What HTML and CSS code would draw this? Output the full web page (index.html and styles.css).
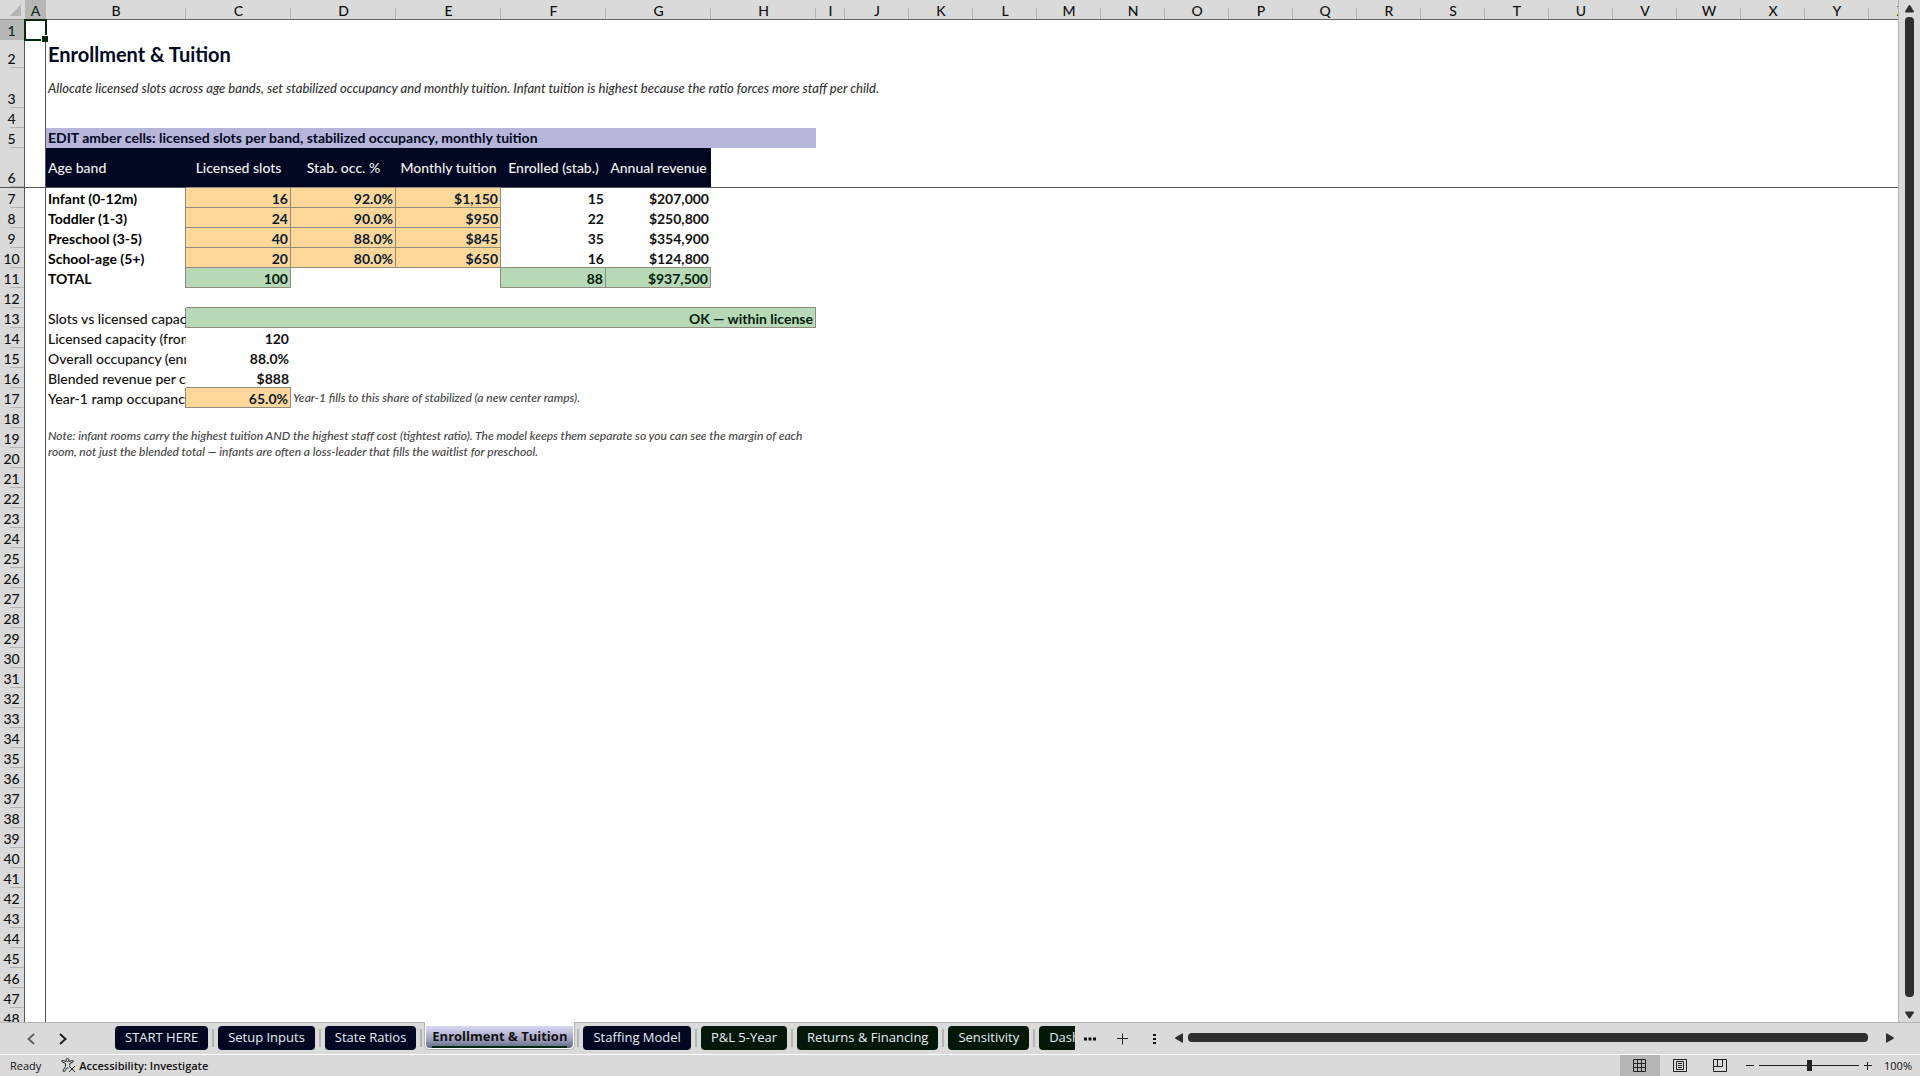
FILE: index.html
```html
<!DOCTYPE html>
<html lang="en">
<head>
<meta charset="utf-8">
<title>Enrollment &amp; Tuition</title>
<link rel="stylesheet" href="styles.css">
</head>
<body>
<div class="app">
  <main class="workspace">
    <div class="sheet">
      <table class="grid">
        <colgroup id="cols"></colgroup>
        <thead><tr id="letters"></tr></thead>
        <tbody id="rows"></tbody>
      </table>
    </div>
    <div class="vscroll">
      <button class="arrow" aria-label="Scroll up"><svg width="9" height="8" viewBox="0 0 9 8"><path d="M4.500 0Q5 0 5.500 .8L9 6.500Q9 7.500 8 7.500H1Q0 7.500 0 6.500L3.500 .8Q4 0 4.500 0z"/></svg></button>
      <div class="vthumb"></div>
      <button class="arrow arrow-down" aria-label="Scroll down"><svg width="9" height="8" viewBox="0 0 9 8"><path d="M4.500 7.500Q4 7.500 3.500 6.700L0 1.500Q0 .5 1 .5H8Q9 .5 9 1.500L5.500 6.700Q5 7.500 4.500 7.500z"/></svg></button>
    </div>
  </main>
  <nav class="tabbar">
    <div class="tabnav">
      <button aria-label="Previous sheet" class="dim"><svg width="8" height="12" viewBox="0 0 8 12"><path d="M7 1L1.500 6L7 11"/></svg></button>
      <button aria-label="Next sheet"><svg width="8" height="12" viewBox="0 0 8 12"><path d="M1 1L6.500 6L1 11"/></svg></button>
    </div>
    <div class="tabs">
      <button class="tab">START HERE</button>
      <i class="sep"></i>
      <button class="tab">Setup Inputs</button>
      <i class="sep"></i>
      <button class="tab">State Ratios</button>
      <i class="sep"></i>
      <div class="active-frame"><button class="tab-active"><span>Enrollment &amp; Tuition</span></button></div>
      <i class="sep"></i>
      <button class="tab">Staffing Model</button>
      <i class="sep"></i>
      <button class="tab green">P&amp;L 5-Year</button>
      <i class="sep"></i>
      <button class="tab green">Returns &amp; Financing</button>
      <i class="sep"></i>
      <button class="tab green">Sensitivity</button>
      <i class="sep"></i>
      <button class="tab green">Dashboard</button>
    </div>
    <div class="tabtools">
      <button aria-label="More sheets"><svg width="12" height="4" viewBox="0 0 12 4"><path class="fill" d="M0 .5h3v3H0zM4.500 .5h3v3h-3zM9 .5h3v3H9z"/></svg></button>
      <button aria-label="New sheet"><svg width="12" height="12" viewBox="0 0 12 12"><path d="M5.500 .5v11M0 5.500h11"/></svg></button>
      <button aria-label="Resize tab area"><svg width="3" height="12" viewBox="0 0 3 12"><path class="fill" d="M0 1h3v2H0zM0 5h3v2H0zM0 9h3v2H0z"/></svg></button>
    </div>
    <div class="hscroll">
      <button class="arrow" aria-label="Scroll left"><svg width="8" height="10" viewBox="0 0 8 10"><path d="M0 5Q0 4.500 1 4L7 .5Q8 0 8 1V9Q8 10 7 9.500L1 6Q0 5.500 0 5z"/></svg></button>
      <div class="hthumb"></div>
      <button class="arrow arrow-right" aria-label="Scroll right"><svg width="8" height="10" viewBox="0 0 8 10"><path d="M8 5Q8 4.500 7 4L1 .5Q0 0 0 1V9Q0 10 1 9.500L7 6Q8 5.500 8 5z"/></svg></button>
    </div>
  </nav>
  <footer class="status">
    <span class="ready">Ready</span>
    <button class="access"><svg width="15" height="15" viewBox="0 0 15 15"><circle cx="6.500" cy="2" r="1.500"/><path d="M5 3.500L1.500 2.500Q.5 2.500 .8 3.700L4.500 5.500V8.500L2 12.500Q2 14 3.500 13.500L6.500 9.500L7.500 10.500M8 3.500L11.500 2.500Q12.800 2.500 12.300 3.800L8.700 5.500V7.500M8 8L14 14M14 8L8 14"/></svg>Accessibility: Investigate</button>
    <div class="views">
      <button class="on" aria-label="Normal view"><svg width="14" height="14" viewBox="0 0 14 14"><path d="M.5 .5h12v12H.5zM4.500 .5v12M8.500 .5v12M.5 4.500h12M.5 8.500h12"/></svg></button>
      <button aria-label="Page layout view"><svg width="14" height="14" viewBox="0 0 14 14"><path d="M.5 .5h13v12H.5zM3.500 2.500h7v8h-7zM5 4.500h4M5 6.500h4M5 8.500h4"/></svg></button>
      <button aria-label="Page break preview"><svg width="14" height="14" viewBox="0 0 14 14"><path d="M.5 .5h13v12H.5zM4.500 .5v7M9.500 .5v7M.5 7.500h9"/></svg></button>
    </div>
    <div class="zoom">
      <button aria-label="Zoom out"><svg width="8" height="8" viewBox="0 0 8 8"><path d="M0 3.500h8"/></svg></button>
      <input type="range" min="0" max="100" value="50" aria-label="Zoom">
      <button aria-label="Zoom in"><svg width="8" height="8" viewBox="0 0 8 8"><path d="M0 3.500h8M3.500 0v8"/></svg></button>
      <span class="percent">100%</span>
    </div>
  </footer>
</div>
<script src="sheet.js"></script>
</body>
</html>
```
FILE: sheet.js
```js
const letters = 'ABCDEFGHIJKLMNOPQRSTUVWXYZ'.split('');
const widths = { A: 21, B: 140, C: 105, D: 105, E: 105, F: 105, G: 105, H: 105, I: 29 };
const heights = { 2: 28, 3: 40, 6: 40 };

// Each entry: [column, text, classes, colspan, rowspan]
const data = {
  1: [['A', '', 'selected']],
  2: [['B', 'Enrollment & Tuition', 'title spill']],
  3: [['B', 'Allocate licensed slots across age bands, set stabilized occupancy and monthly tuition. Infant tuition is highest because the ratio forces more staff per child.', 'subtitle spill']],
  5: [['B', 'EDIT amber cells: licensed slots per band, stabilized occupancy, monthly tuition', 'banner', 7]],
  6: [['B', 'Age band', 'head'], ['C', 'Licensed slots', 'head mid'], ['D', 'Stab. occ. %', 'head mid'], ['E', 'Monthly tuition', 'head mid'], ['F', 'Enrolled (stab.)', 'head mid'], ['G', 'Annual revenue', 'head mid']],
  7: [['B', 'Infant (0-12m)', 'bold'], ['C', '16', 'amber'], ['D', '92.0%', 'amber'], ['E', '$1,150', 'amber'], ['F', '15', 'num'], ['G', '$207,000', 'num']],
  8: [['B', 'Toddler (1-3)', 'bold'], ['C', '24', 'amber'], ['D', '90.0%', 'amber'], ['E', '$950', 'amber'], ['F', '22', 'num'], ['G', '$250,800', 'num']],
  9: [['B', 'Preschool (3-5)', 'bold'], ['C', '40', 'amber'], ['D', '88.0%', 'amber'], ['E', '$845', 'amber'], ['F', '35', 'num'], ['G', '$354,900', 'num']],
  10: [['B', 'School-age (5+)', 'bold'], ['C', '20', 'amber'], ['D', '80.0%', 'amber'], ['E', '$650', 'amber'], ['F', '16', 'num'], ['G', '$124,800', 'num']],
  11: [['B', 'TOTAL', 'bold'], ['C', '100', 'ok'], ['F', '88', 'ok'], ['G', '$937,500', 'ok']],
  13: [['B', 'Slots vs licensed capacity', ''], ['C', 'OK — within license', 'ok', 6]],
  14: [['B', 'Licensed capacity (from Setup)', ''], ['C', '120', 'num']],
  15: [['B', 'Overall occupancy (enrolled)', ''], ['C', '88.0%', 'num']],
  16: [['B', 'Blended revenue per child', ''], ['C', '$888', 'num']],
  17: [['B', 'Year-1 ramp occupancy', ''], ['C', '65.0%', 'amber'], ['D', 'Year-1 fills to this share of stabilized (a new center ramps).', 'hint spill']],
  19: [['B', 'Note: infant rooms carry the highest tuition AND the highest staff cost (tightest ratio). The model keeps them separate so you can see the margin of each room, not just the blended total — infants are often a loss-leader that fills the waitlist for preschool.', 'note', 7, 2]]
};

function add(parent, tag, cls, text) {
  const el = document.createElement(tag);
  if (cls) el.className = cls;
  if (text) el.textContent = text;
  parent.append(el);
  return el;
}

const cols = document.getElementById('cols');
add(cols, 'col').style.width = '25px';
letters.forEach(l => { add(cols, 'col').style.width = (widths[l] || 64) + 'px'; });

const headRow = document.getElementById('letters');
add(headRow, 'td', 'corner');
letters.forEach(l => { add(headRow, 'th', l === 'A' ? 'col-head current' : 'col-head', l).scope = 'col'; });

const body = document.getElementById('rows');
for (let r = 1; r <= 48; r++) {
  const tr = add(body, 'tr', r === 6 ? 'frozen' : '');
  tr.style.height = (heights[r] || 20) + 'px';
  add(tr, 'th', r === 1 ? 'row-head current' : 'row-head', String(r)).scope = 'row';
  const cells = data[r] || [];
  for (let c = 0; c < letters.length; c++) {
    if (r === 20 && c >= 1 && c <= 7) continue;
    const cell = cells.find(x => x[0] === letters[c]);
    const td = add(tr, 'td', (cell ? cell[2] : '') + (c === 0 ? ' frozen-col' : ''), cell && cell[1]);
    if (cell && cell[3]) { td.colSpan = cell[3]; c += cell[3] - 1; }
    if (cell && cell[4]) td.rowSpan = cell[4];
  }
}
```
FILE: styles.css
```css
* { box-sizing: border-box; }
body { margin: 0; }
button { border: 0; padding: 0; margin: 0; background: none; font: inherit; color: inherit; }
svg { display: block; fill: none; stroke: #222; }
svg .fill { fill: #111; stroke: none; }

.app {
  height: 100vh;
  display: flex;
  flex-direction: column;
  background: #dadada;
  color: #111;
  font-family: "Open Sans", "Noto Sans", sans-serif;
  overflow: hidden;
}

.workspace { flex: 1; min-height: 0; display: flex; }
.sheet { flex: 1; min-width: 0; overflow: hidden; background: #fff; border-right: 1px solid #b4b4b4; }

.grid {
  table-layout: fixed;
  width: 0;
  border-collapse: separate;
  border-spacing: 0;
  font-family: Lato, sans-serif;
  font-size: 14px;
  line-height: 16px;
}
.grid th, .grid td { padding: 0 2px 1px; white-space: nowrap; overflow: hidden; vertical-align: bottom; }
.grid td { font-weight: 500; }
.grid thead tr { height: 20px; }

.grid .col-head {
  padding: 2px 0 0;
  font-weight: 500;
  line-height: 17px;
  vertical-align: middle;
  border-bottom: 1px solid #666;
  background: linear-gradient(#b4b4b4, #b4b4b4) right bottom / 1px 11px no-repeat #dadada;
}
.grid .corner {
  border-bottom: 1px solid #999;
  background: linear-gradient(135deg, transparent 50%, #b4b4b4 50%) 10px 5px / 11px 11px no-repeat #dadada;
}
.grid .row-head {
  padding: 0 1px 1px 0;
  font-weight: 500;
  border-right: 1px solid #555;
  background: linear-gradient(#b4b4b4, #b4b4b4) right bottom / 14px 1px no-repeat #dadada;
}
.grid .col-head.current, .grid .row-head.current { background: #b6b6b6; color: #0b2a17; }
.grid .frozen-col { border-right: 1px solid #555; }
.grid .frozen td, .grid .frozen th { border-bottom: 1px solid #555; }
.grid .selected { position: relative; overflow: visible; outline: 2px solid #04290f; outline-offset: -1px; }
.grid .selected::after {
  content: "";
  position: absolute;
  right: -3px;
  bottom: -2px;
  width: 6px;
  height: 6px;
  background: #04290f;
  border: solid #fff;
  border-width: 1px 0 0 1px;
}

.grid .spill { overflow: visible; }
.grid .title { padding-bottom: 2px; font-size: 20px; font-weight: 700; line-height: 24px; color: #020822; }
.grid .subtitle { font-size: 13px; font-style: italic; vertical-align: middle; color: #333; }
.grid .banner { padding-bottom: 2px; background: #b6b6da; font-weight: 700; color: #020822; }
.grid .head { padding-bottom: 0; background: #020822; color: #f2f2f2; vertical-align: middle; }
.grid .mid { text-align: center; }
.grid .bold { font-weight: 700; color: #000; }
.grid .num, .grid .amber, .grid .ok { text-align: right; font-weight: 700; }
.grid .amber, .grid .ok {
  padding-bottom: 0;
  border-right: 1px solid #8c8c80;
  border-bottom: 1px solid #8c8c80;
  box-shadow: -1px 0 0 #8c8c80, 0 -1px 0 #8c8c80;
}
.grid .amber { background: #ffd899; color: #0a1c33; }
.grid .ok { background: #b8d9b8; color: #04200c; }
.grid .hint { font-size: 12px; font-style: italic; vertical-align: middle; color: #444; }
.grid .note { font-size: 12px; font-style: italic; vertical-align: top; white-space: normal; color: #444; }

.vscroll { width: 21px; display: flex; flex-direction: column; align-items: center; padding: 5px 1px 3px 0; gap: 4px; }
.vthumb { flex: 1; width: 9px; border-radius: 4px; background: #2f2f2f; }
.arrow svg { fill: #2f2f2f; stroke: none; }
.arrow-down { margin-top: 10px; }
.arrow-right { margin-left: 13px; }

.tabbar { height: 32px; display: flex; border-top: 1px solid #b4b4b4; }
.tabnav { width: 115px; display: flex; gap: 24px; padding-left: 27px; align-items: center; }
.tabnav .dim svg { stroke: #666; }
.tabnav svg { stroke-width: 2; }
.tabs { width: 960px; display: flex; overflow: hidden; margin-top: -1px; padding-top: 4px; font-size: 13px; line-height: 23px; }
.tab { flex: none; height: 24px; padding: 0 10px 1px; border-radius: 4px; background: #020822; color: #e6eef4; }
.tab.green { background: #04180a; }
.sep { flex: none; width: 2px; height: 18px; margin: 3px 4px; background: #b4b4b4; }
.active-frame { flex: none; height: 28px; margin: -4px -2px 0; padding: 4px 1px 0; background: #fff; border: solid #b4b4b4; border-width: 0 1px 1px; border-radius: 0 0 5px 5px; }
.tab-active { display: block; height: 22px; padding: 0 6px; border-radius: 0 0 4px 4px; background: linear-gradient(#d8d8f4, #a8a8c4 55%, #5a6a80); font-weight: 700; }
.tab-active span { display: block; height: 21px; line-height: 18px; border-bottom: 2px solid #04290f; }
.tabtools { display: flex; align-items: center; gap: 21px; padding-left: 9px; }
.tabtools button:last-child { margin-left: 3px; }
.hscroll { flex: 1; display: flex; align-items: center; gap: 5px; padding: 0 26px 2px 19px; }
.hthumb { flex: 1; height: 9px; border-radius: 4px; background: #2f2f2f; }

.status { height: 22px; display: flex; align-items: center; border-top: 1px solid #fff; font-size: 11px; line-height: 20px; padding-left: 10px; }
.access { display: flex; align-items: center; gap: 3px; margin-left: 20px; font-weight: 600; }
.views { display: flex; margin-left: auto; align-self: stretch; }
.views button { width: 40px; display: grid; place-items: center; }
.views .on { background: #b6b6b6; }
.zoom { display: flex; align-items: center; padding-left: 6px; }
.zoom input { width: 100px; margin: 0 5px; appearance: none; height: 11px; background: linear-gradient(#222, #222) center / 100% 1px no-repeat; }
.zoom input::-webkit-slider-thumb { appearance: none; width: 5px; height: 11px; background: #222; }
.percent { width: 48px; padding-right: 8px; text-align: right; }
```
